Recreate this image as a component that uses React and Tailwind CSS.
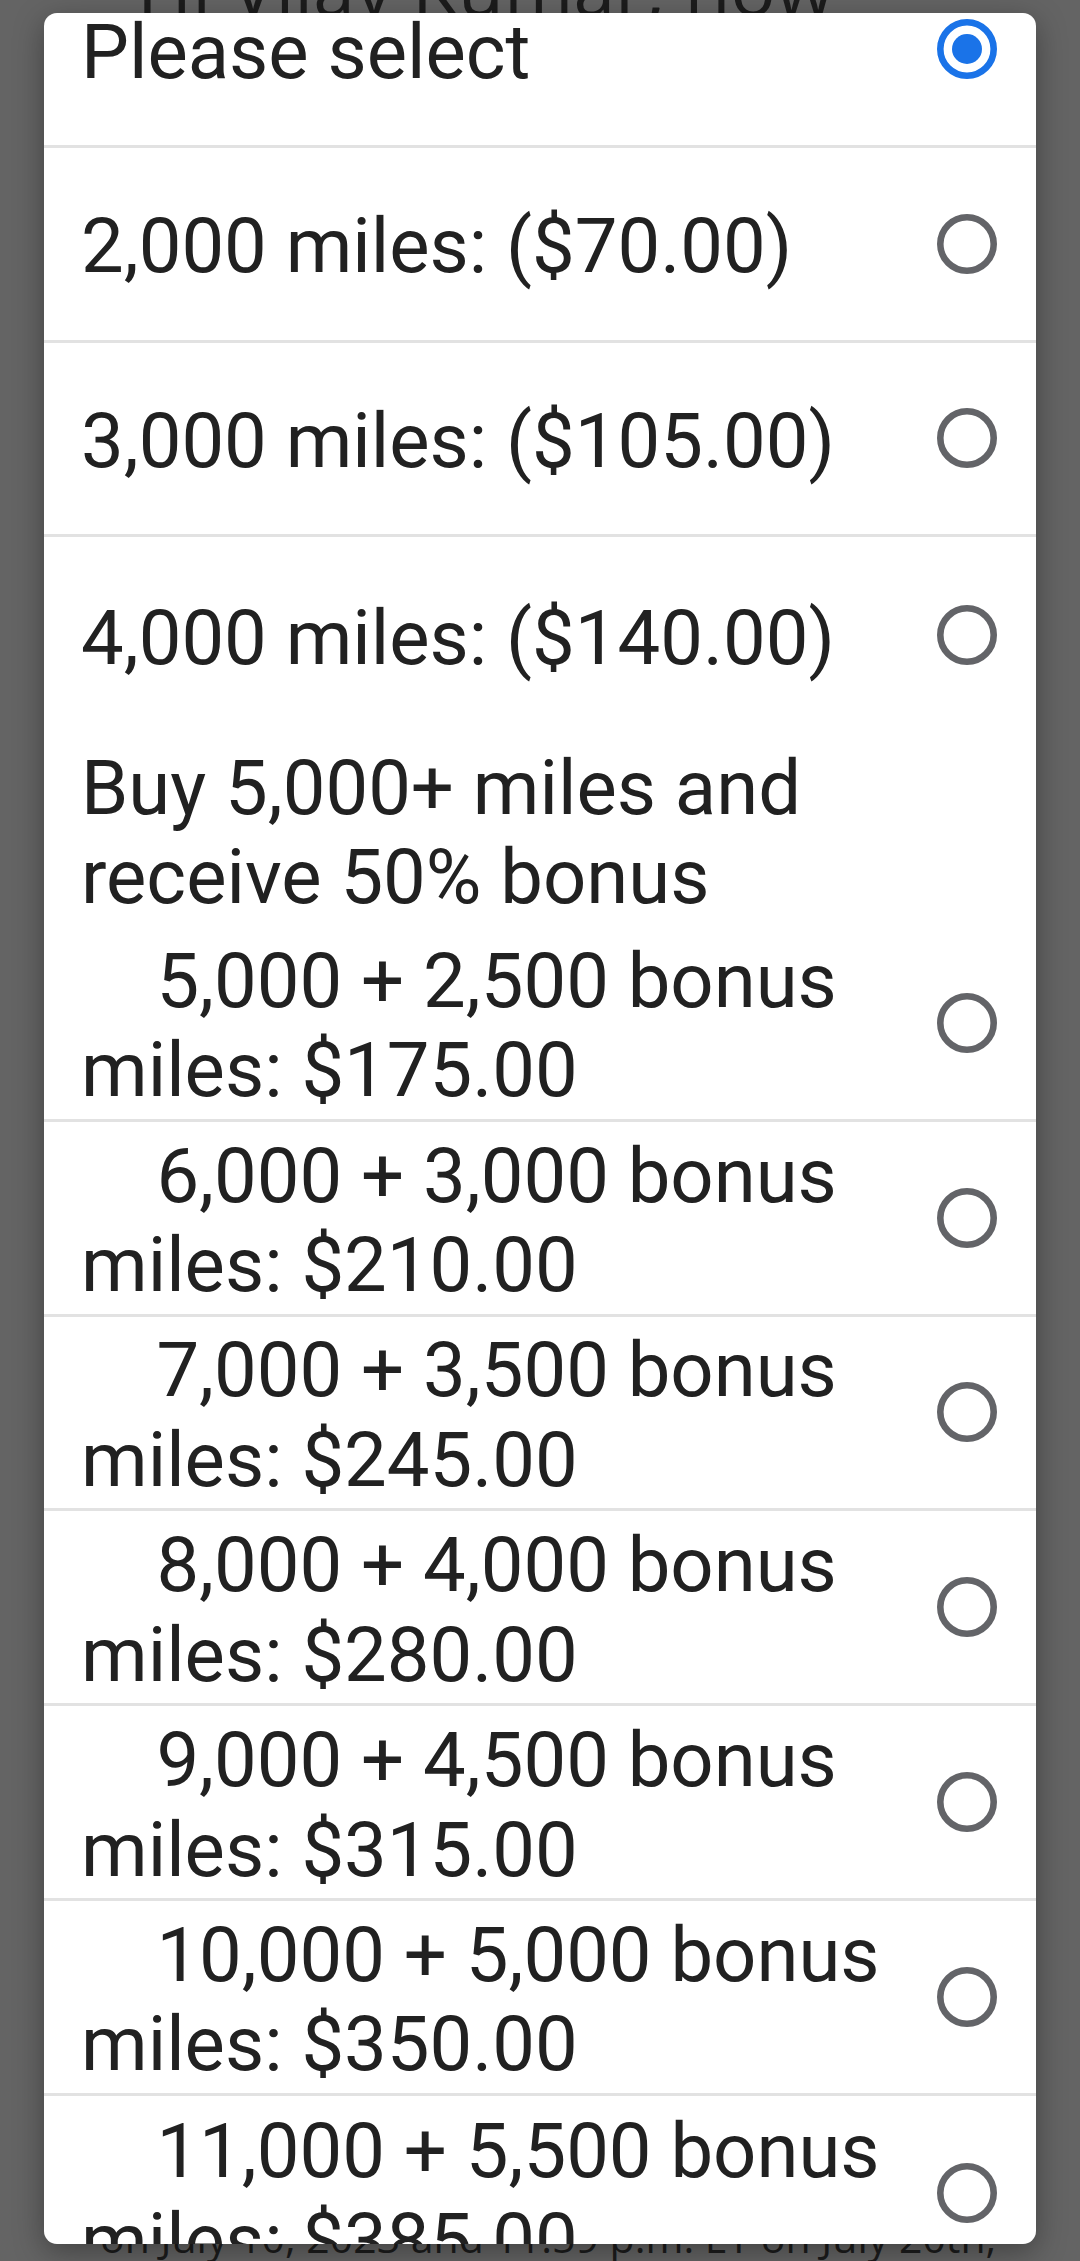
import React from 'react'

const NB = '\u00a0\u00a0\u00a0\u00a0'

const options = [
  { lines: ['Please select'], selected: true, divider: true },
  { lines: ['2,000 miles: ($70.00)'], divider: true },
  { lines: ['3,000 miles: ($105.00)'], divider: true },
  { lines: ['4,000 miles: ($140.00)'] },
  { lines: ['Buy 5,000+ miles and', 'receive 50% bonus'], header: true },
  { lines: [NB + '5,000 + 2,500 bonus', 'miles: $175.00'], divider: true },
  { lines: [NB + '6,000 + 3,000 bonus', 'miles: $210.00'], divider: true },
  { lines: [NB + '7,000 + 3,500 bonus', 'miles: $245.00'], divider: true },
  { lines: [NB + '8,000 + 4,000 bonus', 'miles: $280.00'], divider: true },
  { lines: [NB + '9,000 + 4,500 bonus', 'miles: $315.00'], divider: true },
  { lines: [NB + '10,000 + 5,000 bonus', 'miles: $350.00'], divider: true },
  { lines: [NB + '11,000 + 5,500 bonus', 'miles: $385.00'] },
]

const Radio = ({ checked }) => (
  <svg width="60" height="60" viewBox="0 0 60 60" className="shrink-0">
    <circle
      cx="30"
      cy="30"
      r="26.7"
      fill="none"
      stroke={checked ? '#1a73e8' : '#636468'}
      strokeWidth="6.6"
    />
    {checked && <circle cx="30" cy="30" r="15" fill="#1a73e8" />}
  </svg>
)

const Row = ({ opt }) => (
  <div
    className={`h-[194.8px] shrink-0 flex items-center justify-between pl-[37px] pr-[39px] ${
      opt.divider ? 'border-b-[3px] border-[#e2e2e2]' : ''
    }`}
  >
    <div className="flex-1 pt-[7px] text-[76px] leading-[89.5px] text-[#212121] whitespace-nowrap">
      {opt.lines.map((l, i) => (
        <div key={i}>{l}</div>
      ))}
    </div>
    {!opt.header && <Radio checked={opt.selected} />}
  </div>
)

export default function App() {
  return (
    <div
      className="relative w-[1080px] h-[2261px] overflow-hidden bg-[#646464]"
      style={{ fontFamily: 'Roboto, "Noto Sans", sans-serif' }}
    >
      {/* page under the dialog */}
      <div
        className="h-full flex flex-col text-[#1c1c1c]"
        style={{ fontFamily: '"Open Sans", "Noto Sans", sans-serif' }}
      >
        <div className="mt-[-50px] pl-[137px] text-[75px] leading-[75px] font-medium whitespace-nowrap">
          Hi Vijay Kumar, now
        </div>
        <div className="flex-1" />
        <div className="mb-[3px] pl-[100px] text-[41px] leading-[41px] whitespace-nowrap">
          on July 10, 2023 and 11:59 p.m. ET on July 20th,
        </div>
      </div>

      {/* select dialog */}
      <div className="absolute left-[44px] top-[13px] w-[992px] h-[2231px] bg-white rounded-[13px] overflow-hidden shadow-[0_8px_30px_rgba(0,0,0,0.35)]">
        <div className="flex flex-col -mt-[60px]">
          {options.map((o, i) => (
            <Row key={i} opt={o} />
          ))}
        </div>
      </div>
    </div>
  )
}
